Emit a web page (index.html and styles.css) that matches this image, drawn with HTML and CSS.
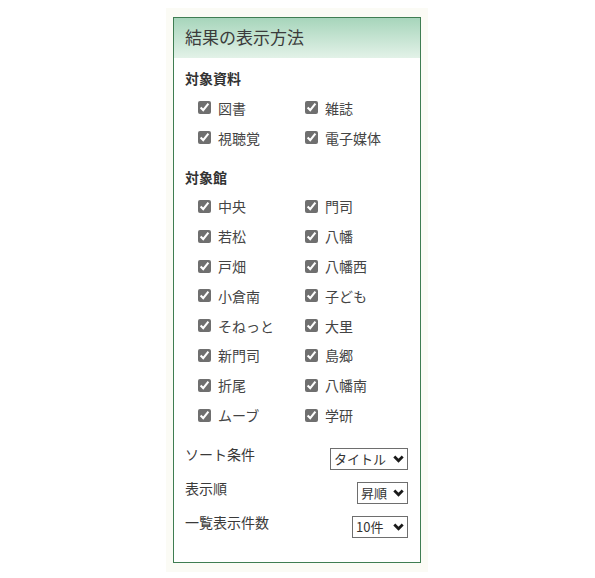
FILE: index.html
```html
<!DOCTYPE html>
<html lang="ja">
  <head>
    <meta charset="UTF-8" />
    <meta name="viewport" content="width=device-width, initial-scale=1.0" />
    <title>結果の表示方法</title>
    <link rel="stylesheet" href="styles.css">
  </head>
  <body>
    <div class="frame">
      <section class="panel">
        <h2 class="panel-title">結果の表示方法</h2>
        <div class="panel-body">
          <h3>対象資料</h3>
          <div class="checks">
            <label><input type="checkbox" checked>図書</label>
            <label><input type="checkbox" checked>雑誌</label>
            <label><input type="checkbox" checked>視聴覚</label>
            <label><input type="checkbox" checked>電子媒体</label>
          </div>

          <h3>対象館</h3>
          <div class="checks">
            <label><input type="checkbox" checked>中央</label>
            <label><input type="checkbox" checked>門司</label>
            <label><input type="checkbox" checked>若松</label>
            <label><input type="checkbox" checked>八幡</label>
            <label><input type="checkbox" checked>戸畑</label>
            <label><input type="checkbox" checked>八幡西</label>
            <label><input type="checkbox" checked>小倉南</label>
            <label><input type="checkbox" checked>子ども</label>
            <label><input type="checkbox" checked>そねっと</label>
            <label><input type="checkbox" checked>大里</label>
            <label><input type="checkbox" checked>新門司</label>
            <label><input type="checkbox" checked>島郷</label>
            <label><input type="checkbox" checked>折尾</label>
            <label><input type="checkbox" checked>八幡南</label>
            <label><input type="checkbox" checked>ムーブ</label>
            <label><input type="checkbox" checked>学研</label>
          </div>

          <div class="options">
            <div class="option">
              <span>ソート条件</span>
              <span class="dropdown">
                <select class="w-title"><option>タイトル</option><option>著者</option><option>出版年</option></select>
                <svg viewBox="0 0 11 8"><path d="M1.3 1.5 L5.5 5.7 L9.7 1.5" /></svg>
              </span>
            </div>
            <div class="option">
              <span>表示順</span>
              <span class="dropdown">
                <select class="w-order"><option>昇順</option><option>降順</option></select>
                <svg viewBox="0 0 11 8"><path d="M1.3 1.5 L5.5 5.7 L9.7 1.5" /></svg>
              </span>
            </div>
            <div class="option">
              <span>一覧表示件数</span>
              <span class="dropdown">
                <select class="w-count"><option>10件</option><option>20件</option><option>50件</option></select>
                <svg viewBox="0 0 11 8"><path d="M1.3 1.5 L5.5 5.7 L9.7 1.5" /></svg>
              </span>
            </div>
          </div>
        </div>
      </section>
    </div>
  </body>
</html>
```

FILE: styles.css
```css
* {
  margin: 0;
  padding: 0;
  box-sizing: border-box;
}
body {
  background: #fff;
  color: #3a3a3a;
  font-family: "Noto Sans CJK JP", "Noto Sans", sans-serif;
}
.frame {
  width: 262px;
  margin: 8px 0 0 166px;
  padding: 9px 7px 9px 7px;
  background: #fbfbf5;
}
.panel {
  border: 1px solid #3f7d52;
  background: #fff;
}
.panel-title {
  height: 40px;
  padding-left: 11px;
  font-size: 17px;
  font-weight: 400;
  line-height: 38px;
  color: #3b3b3b;
  background: linear-gradient(#a7d5bb, #e3f2e8);
}
.panel-body {
  padding: 10px 12px 24px 11px;
}
h3 {
  font-size: 14px;
  font-weight: 700;
  line-height: 20px;
  color: #333;
}
.checks {
  display: grid;
  grid-template-columns: 107px 107px;
  grid-auto-rows: 29.8px;
  padding-left: 13px;
  margin: 5px 0 14px;
}
.checks:last-of-type {
  margin-bottom: 14px;
}
.checks label {
  display: flex;
  align-items: center;
  font-size: 14px;
  color: #444;
}
.checks input {
  width: 13px;
  height: 13px;
  margin-right: 7px;
  accent-color: #6f6f6f;
}
.options {
  display: flex;
  flex-direction: column;
  gap: 8px;
}
.option {
  display: flex;
  justify-content: space-between;
  align-items: flex-start;
  font-size: 14px;
  line-height: 20px;
  color: #3a3a3a;
}
.dropdown {
  position: relative;
  margin-top: 4px;
  height: 22px;
}
.dropdown select {
  appearance: none;
  -webkit-appearance: none;
  height: 22px;
  padding: 0 18px 0 3px;
  border: 1px solid #6e6e6e;
  border-radius: 0;
  background: #fff;
  font-family: "Noto Sans CJK JP", sans-serif;
  font-size: 13px;
  color: #333;
}
.dropdown svg {
  position: absolute;
  right: 4px;
  top: 7px;
  width: 11px;
  height: 8px;
  pointer-events: none;
}
.dropdown path {
  fill: none;
  stroke: #1a1a1a;
  stroke-width: 2.8;
}
.w-title { width: 78px; }
.w-order { width: 51px; }
.w-count { width: 56px; }
```
